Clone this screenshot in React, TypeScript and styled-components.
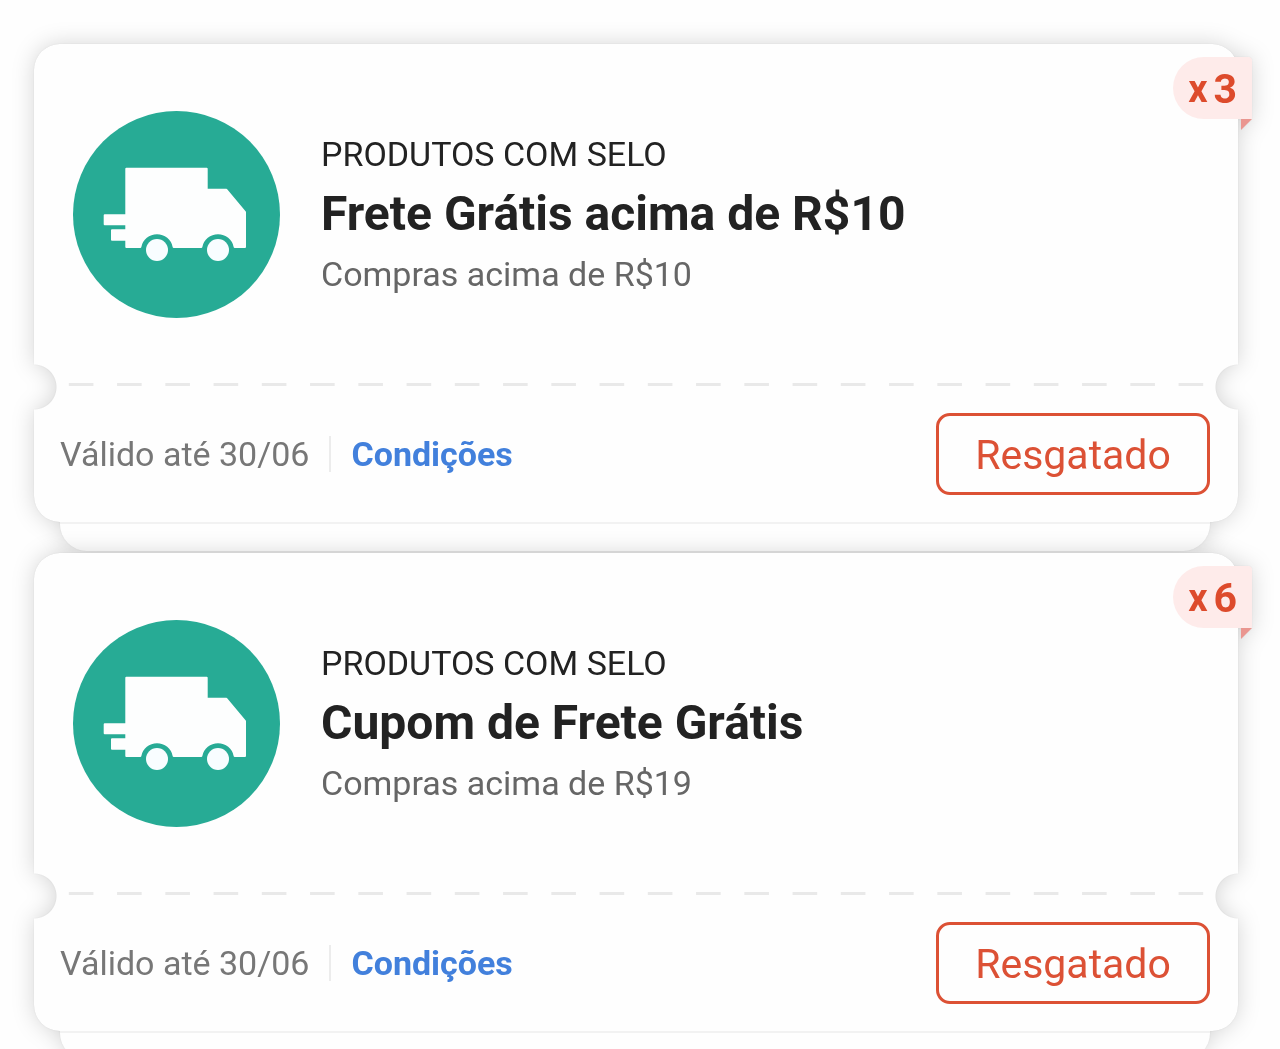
import React from "react";
import styled, { createGlobalStyle } from "styled-components";

const GlobalStyle = createGlobalStyle`
  *, *::before, *::after { box-sizing: border-box; }
  body {
    margin: 0;
    background: #fefefe;
    font-family: Roboto, "Noto Sans", sans-serif;
  }
`;

const Page = styled.main`
  height: 100vh;
  overflow-y: auto;
  scrollbar-width: none;
  background: #fefefe;
`;

const CouponList = styled.ul`
  display: flex;
  flex-direction: column;
  gap: 2px;
  margin: 0;
  padding: 44px 42px 44px 34px;
  list-style: none;
`;

const CouponItem = styled.li`
  position: relative;
  filter: drop-shadow(0 0 1px rgba(0, 0, 0, 0.06)) drop-shadow(0 0 11px rgba(0, 0, 0, 0.16));
`;

const Ticket = styled.article`
  border-radius: 26px;
  background: #fefefe;
  mask-image:
    radial-gradient(circle at 0 calc(100% - 135px), transparent 22px, #000 23px),
    radial-gradient(circle at 100% calc(100% - 135px), transparent 22px, #000 23px);
  mask-composite: intersect;
`;

const TicketBody = styled.div`
  display: flex;
  align-items: center;
  gap: 41px;
  padding: 67px 39px 65px;
`;

const Seal = styled.svg`
  flex: none;
  width: 207px;
  height: 207px;
`;

const Details = styled.div`
  min-width: 0;
`;

const Category = styled.p`
  margin: 0;
  color: #222;
  font-size: 34px;
  line-height: 48px;
`;

const Title = styled.h2`
  margin: 0;
  color: #222;
  font-size: 48px;
  font-weight: 700;
  line-height: 72px;
`;

const Minimum = styled.p`
  margin: 0;
  padding-bottom: 2px;
  color: #666;
  font-size: 34px;
  line-height: 48px;
`;

const Perforation = styled.div`
  height: 3px;
  margin: 0 23px;
  background-image: linear-gradient(90deg, transparent 25%, #e9e9e9 25% 75%, transparent 75%);
  background-size: 48px 3px;
  background-repeat: round;
`;

const TicketFooter = styled.footer`
  display: flex;
  align-items: center;
  justify-content: space-between;
  padding: 27px 28px 27px 26px;
`;

const Terms = styled.div`
  display: flex;
  align-items: center;
  font-size: 34px;
  line-height: 48px;
`;

const Validity = styled.span`
  margin-right: 20px;
  color: #777;
`;

const ConditionsLink = styled.a`
  padding-left: 20px;
  border-left: 2px solid #ececec;
  color: #4280dc;
  font-weight: 700;
  line-height: 36px;
  text-decoration: none;
`;

const ClaimButton = styled.button`
  min-width: 274px;
  height: 82px;
  padding: 2px 36px 0;
  border: 3px solid #dc5135;
  border-radius: 14px;
  background: transparent;
  color: #dc5135;
  font-family: inherit;
  font-size: 41px;
  line-height: 48px;
`;

const Stub = styled.div`
  height: 29px;
  margin: 0 28px 0 26px;
  border-top: 2px solid #f2f2f2;
  border-radius: 0 0 27px 27px;
  background: #fefefe;
`;

const CountBadge = styled.div`
  position: absolute;
  top: 13px;
  right: -14px;
  display: flex;
  align-items: center;
  gap: 6px;
  height: 62px;
  padding: 2px 15px 0;
  border-radius: 31px 4px 0 31px;
  background: #feebea;
  color: #dd4b2c;
  font-size: 41px;
  font-weight: 700;
  line-height: 60px;

  &::after {
    content: "";
    position: absolute;
    top: 100%;
    right: 0;
    width: 11px;
    height: 11px;
    background: #ea9690;
    clip-path: polygon(0 0, 100% 0, 0 100%);
  }
`;

const Times = styled.span`
  font-size: 38px;
`;

interface Coupon {
  id: string;
  category: string;
  title: string;
  minimum: string;
  validity: string;
  count: number;
}

const coupons: Coupon[] = [
  {
    id: "frete-10",
    category: "PRODUTOS COM SELO",
    title: "Frete Grátis acima de R$10",
    minimum: "Compras acima de R$10",
    validity: "Válido até 30/06",
    count: 3,
  },
  {
    id: "frete-19",
    category: "PRODUTOS COM SELO",
    title: "Cupom de Frete Grátis",
    minimum: "Compras acima de R$19",
    validity: "Válido até 30/06",
    count: 6,
  },
];

function TruckSeal() {
  return (
    <Seal viewBox="0 0 207 207" aria-hidden="true">
      <circle cx="103.5" cy="103.5" r="103.5" fill="#27ab95" />
      <path
        fill="#fdfefe"
        stroke="#fdfefe"
        strokeWidth="2"
        strokeLinejoin="round"
        d="M53.3 57.7H133.7V78.7H153.2L172 101.2V136H161.7A17 17 0 0 0 128.3 136H100.7A17 17 0 0 0 67.3 136H53.3V128.7H39V119.3H53.3V113.3H31.7V104.3H53.3Z"
      />
      <circle cx="84" cy="139" r="11" fill="#f8fdff" />
      <circle cx="145" cy="139" r="11" fill="#f8fdff" />
    </Seal>
  );
}

function CouponCard({ coupon }: { coupon: Coupon }) {
  return (
    <CouponItem>
      <Ticket>
        <TicketBody>
          <TruckSeal />
          <Details>
            <Category>{coupon.category}</Category>
            <Title>{coupon.title}</Title>
            <Minimum>{coupon.minimum}</Minimum>
          </Details>
        </TicketBody>
        <Perforation />
        <TicketFooter>
          <Terms>
            <Validity>{coupon.validity}</Validity>
            <ConditionsLink href="#condicoes">Condições</ConditionsLink>
          </Terms>
          <ClaimButton type="button">Resgatado</ClaimButton>
        </TicketFooter>
      </Ticket>
      <Stub />
      <CountBadge>
        <Times>x</Times>
        <span>{coupon.count}</span>
      </CountBadge>
    </CouponItem>
  );
}

export default function App() {
  return (
    <>
      <GlobalStyle />
      <Page>
        <CouponList>
          {coupons.map((coupon) => (
            <CouponCard key={coupon.id} coupon={coupon} />
          ))}
        </CouponList>
      </Page>
    </>
  );
}
